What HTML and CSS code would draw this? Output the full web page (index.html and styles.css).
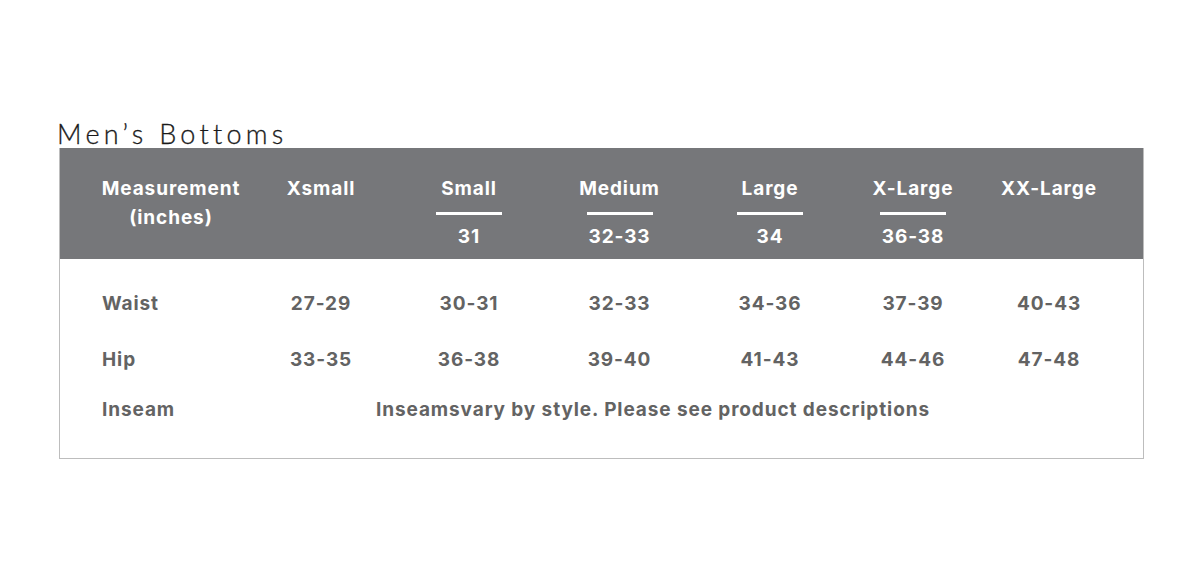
FILE: index.html
```html
<!DOCTYPE html>
<html>
<head>
<meta charset="utf-8">
<link rel="stylesheet" href="styles.css">
</head>
<body>
<div class="page">
  <h1 class="title">Men’s Bottoms</h1>
  <div class="chart">
    <div class="head grid">
      <div class="hcell c1"><span class="name">Measurement</span><span class="sub">(inches)</span></div>
      <div class="hcell"><span class="name">Xsmall</span></div>
      <div class="hcell"><span class="name">Small</span><span class="rule"></span><span class="num">31</span></div>
      <div class="hcell"><span class="name">Medium</span><span class="rule"></span><span class="num">32-33</span></div>
      <div class="hcell"><span class="name">Large</span><span class="rule"></span><span class="num">34</span></div>
      <div class="hcell"><span class="name">X-Large</span><span class="rule"></span><span class="num">36-38</span></div>
      <div class="hcell c7"><span class="name">XX-Large</span></div>
    </div>
    <div class="body">
      <div class="row grid r-waist">
        <div class="label">Waist</div>
        <div class="val">27-29</div>
        <div class="val">30-31</div>
        <div class="val">32-33</div>
        <div class="val">34-36</div>
        <div class="val">37-39</div>
        <div class="val c7">40-43</div>
      </div>
      <div class="row grid r-hip">
        <div class="label">Hip</div>
        <div class="val">33-35</div>
        <div class="val">36-38</div>
        <div class="val">39-40</div>
        <div class="val">41-43</div>
        <div class="val">44-46</div>
        <div class="val c7">47-48</div>
      </div>
      <div class="row grid r-inseam">
        <div class="label">Inseam</div>
        <div class="note">Inseamsvary by style. Please see product descriptions</div>
      </div>
    </div>
  </div>
</div>
</body>
</html>
```
FILE: styles.css
```css
html, body {
  margin: 0;
  padding: 0;
  background: #ffffff;
}
body {
  font-family: "Inter", "Open Sans", "Liberation Sans", sans-serif;
}
.page {
  padding: 116px 56px 0 59px;
  width: 1085px;
}
.title {
  margin: 0 0 0 -2px;
  font-family: "Lato", "Open Sans", sans-serif;
  font-weight: 300;
  font-size: 27px;
  line-height: 36px;
  letter-spacing: 4.3px;
  color: #1a1a1a;
  height: 32px;
  -webkit-text-stroke: 0.3px #1a1a1a;
}
.chart {
  width: 1083px;
  border: 1px solid #bdbdbd;
  border-top: none;
}
.grid {
  display: grid;
  grid-template-columns: 187px 148px 148px 153px 148px 138px 161px;
}
.head {
  background: #76777a;
  height: 111px;
  box-sizing: border-box;
  padding-top: 27px;
  color: #ffffff;
  font-weight: 700;
  font-size: 19px;
  letter-spacing: 0.9px;
}
.hcell {
  display: flex;
  flex-direction: column;
  align-items: center;
}
.hcell.c1 { padding-left: 35px; }
.c7 { padding-right: 27px; }
.name, .sub, .num {
  line-height: 28px;
  white-space: nowrap;
}
.sub { margin-top: 1px; }
.rule {
  width: 66px;
  height: 3px;
  background: #ffffff;
  margin-top: 9px;
}
.num { margin-top: 8px; }
.body {
  padding: 31px 0 34px;
  color: #636363;
  font-weight: 700;
  font-size: 19px;
  letter-spacing: 0.9px;
}
.row {
  line-height: 28px;
}
.r-hip { margin-top: 28px; }
.r-inseam { margin-top: 22px; }
.label {
  padding-left: 42px;
}
.val {
  text-align: center;
}
.note {
  grid-column: 2 / 8;
  padding-left: 129px;
  white-space: nowrap;
}
```
